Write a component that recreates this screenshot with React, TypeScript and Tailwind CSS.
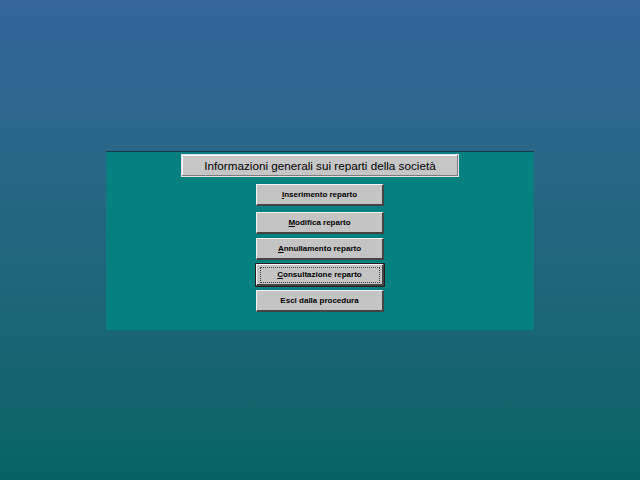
import React from "react";

const buttons: { pre: string; u: string; rest: string; focus?: boolean; mt: string }[] = [
  { pre: "", u: "I", rest: "nserimento reparto", mt: "mt-[7px]" },
  { pre: "", u: "M", rest: "odifica reparto", mt: "mt-[6px]" },
  { pre: "", u: "A", rest: "nnullamento reparto", mt: "mt-[4px]" },
  { pre: "", u: "C", rest: "onsultazione reparto", focus: true, mt: "mt-[4px]" },
  { pre: "Esci dalla procedura", u: "", rest: "", mt: "mt-[4px]" },
];

export default function App() {
  return (
    <div className="w-[640px] h-[480px] bg-gradient-to-b from-[#34669a] to-[#046462] flex flex-col items-start">
      <div className="ml-[106px] mt-[151px] w-[428px] h-[179px] bg-[#078080] border-t border-[#183848] flex flex-col items-center">
        <div className="mt-[2px] w-[278px] h-[23px] bg-[#c6c6c6] border border-[#e2e2e2] shadow-[inset_-1px_-1px_0_#7c7c7c,inset_1px_1px_0_#ffffff] flex items-center justify-center text-[11.7px] text-black font-['Liberation_Sans',Arial,sans-serif]">
          Informazioni generali sui reparti della società
        </div>
        {buttons.map((b, i) => (
          <div
            key={i}
            className={`${b.mt} w-[128px] h-[22px] bg-[#c4c4c4] border-t border-l border-[#f4f4f4] border-b-2 border-r-2 border-b-[#444444] border-r-[#444444] ${b.focus ? "outline outline-1 outline-[#202020]" : ""} flex items-center justify-center font-['Liberation_Sans',Arial,sans-serif] font-bold text-[8px] text-black`}
          >
            {b.focus ? (
              <span className="border border-dotted border-[#404040] w-[120px] h-[16px] flex items-center justify-center">
                <span className="underline">{b.u}</span>
                {b.rest}
              </span>
            ) : (
              <span>
                {b.pre}
                {b.u && <span className="underline">{b.u}</span>}
                {b.rest}
              </span>
            )}
          </div>
        ))}
      </div>
    </div>
  );
}
